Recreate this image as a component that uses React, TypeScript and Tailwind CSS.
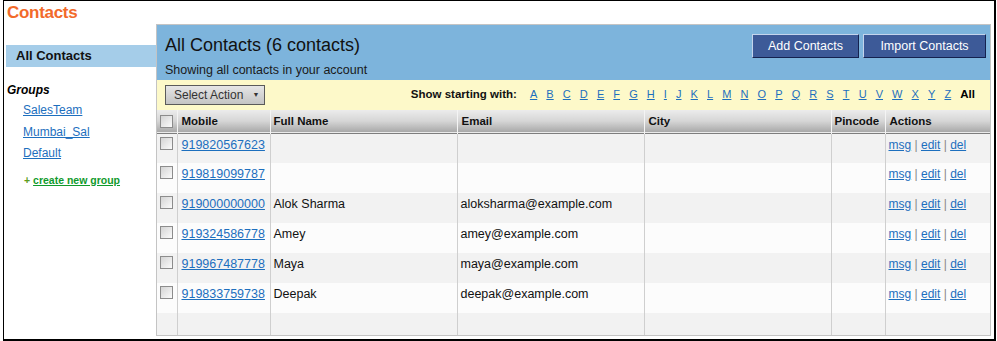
const font = { fontFamily: '"Liberation Sans", Arial, sans-serif' };

const letters = "ABCDEFGHIJKLMNOPQRSTUVWXYZ".split("");

const contacts = [
  { mobile: "919820567623", name: "", email: "" },
  { mobile: "919819099787", name: "", email: "" },
  { mobile: "919000000000", name: "Alok Sharma", email: "aloksharma@example.com" },
  { mobile: "919324586778", name: "Amey", email: "amey@example.com" },
  { mobile: "919967487778", name: "Maya", email: "maya@example.com" },
  { mobile: "919833759738", name: "Deepak", email: "deepak@example.com" },
];

const Checkbox = () => (
  <span className="block w-[13px] h-[13px] border border-[#8c8c8c] bg-gradient-to-br from-[#d4d4d4] to-[#fbfbfb]" />
);

const Sidebar = () => (
  <div className="w-[152px] shrink-0 pl-[2px]">
    <div className="mt-[21px] h-[22px] bg-[#a5cde9] pl-[10px] flex items-center text-[13px] font-bold text-[#111]">
      All Contacts
    </div>
    <div className="mt-[15px] pl-[1px] h-[16px] leading-[16px] text-[12px] font-bold italic text-black">Groups</div>
    <div className="mt-[2px] pl-[17px] text-[12px]">
      {["SalesTeam", "Mumbai_Sal", "Default"].map((g) => (
        <div key={g} className="h-[21.5px] leading-[21.5px]">
          <a href="#" className="text-[#1d6fbe] underline">
            {g}
          </a>
        </div>
      ))}
    </div>
    <div className="mt-[8px] pl-[18px] h-[14px] leading-[14px] text-[10.5px] font-bold">
      <span className="text-[#5c9c1c]">+</span>{" "}
      <a href="#" className="text-[#109a2c] underline">
        create new group
      </a>
    </div>
  </div>
);

const PanelHeader = () => (
  <div className="h-[55px] bg-[#7db4dc] flex justify-between">
    <div className="pl-[8px] pt-[9px]">
      <div className="text-[18px] leading-[22px] text-[#111]">All Contacts (6 contacts)</div>
      <div className="mt-[7px] text-[12.5px] leading-[15px] text-[#1a1a1a]">Showing all contacts in your account</div>
    </div>
    <div className="flex gap-[4px] pt-[9px] pr-[4px]">
      <button className="h-[24px] w-[107px] bg-[#3d5a98] text-white text-[12.5px] border border-t-[#c4d4ec] border-l-[#c4d4ec] border-r-[#15224f] border-b-[#15224f]">
        Add Contacts
      </button>
      <button className="h-[24px] w-[123px] bg-[#3d5a98] text-white text-[12.5px] border border-t-[#c4d4ec] border-l-[#c4d4ec] border-r-[#15224f] border-b-[#15224f]">
        Import Contacts
      </button>
    </div>
  </div>
);

const FilterBar = () => (
  <div className="h-[30px] bg-[#fdf9c9] flex items-center justify-between pl-[8px] pr-[15px]">
    <button className="h-[20px] w-[100px] flex items-center gap-[9px] pl-[8px] border border-[#5a5a5a] bg-gradient-to-b from-[#e6e6e6] to-[#c4c4c4] text-[12px] text-[#333]">
      Select Action
      <span className="text-[7px] text-[#333]">▼</span>
    </button>
    <div className="flex items-center text-[11px]">
      <span className="font-bold text-[11.5px] text-[#111] mr-[13px]">Show starting with:</span>
      <div className="flex gap-[9.1px]">
        {letters.map((l) => (
          <a key={l} href="#" className="text-[#1d6fbe] underline">
            {l}
          </a>
        ))}
        <span className="font-bold text-[11.5px] text-black">All</span>
      </div>
    </div>
  </div>
);

const cell = "border-l border-[#cfcfcf] align-top";

const ContactsTable = () => (
  <table className="w-full table-fixed border-collapse text-[12.5px] text-[#111]">
    <colgroup>
      <col className="w-[20px]" />
      <col className="w-[93px]" />
      <col className="w-[187px]" />
      <col className="w-[187px]" />
      <col className="w-[187px]" />
      <col className="w-[54px]" />
      <col />
    </colgroup>
    <thead>
      <tr className="h-[23px] bg-gradient-to-b from-[#ececec] via-[#d6d6d6] to-[#a9a9a9] border-b border-[#7e7e7e] text-[11.5px] font-bold text-left">
        <th className="pl-[3px]">
          <Checkbox />
        </th>
        <th className="pl-[4px] border-l border-[#f4f4f4]">Mobile</th>
        <th className="pl-[3px] border-l border-[#f4f4f4]">Full Name</th>
        <th className="pl-[4px] border-l border-[#f4f4f4]">Email</th>
        <th className="pl-[4px] border-l border-[#f4f4f4]">City</th>
        <th className="pl-[3px] border-l border-[#f4f4f4]">Pincode</th>
        <th className="pl-[4px] border-l border-[#f4f4f4]">Actions</th>
      </tr>
    </thead>
    <tbody>
      {contacts.map((c, i) => (
        <tr key={c.mobile} className={i % 2 === 0 ? "h-[30px] bg-[#f2f2f2]" : "h-[30px] bg-[#fcfcfc]"}>
          <td className="align-top pl-[3px] pt-[3px]">
            <Checkbox />
          </td>
          <td className={`${cell} pl-[4px] pt-[2px]`}>
            <a href="#" className="text-[#1d6fbe] underline">
              {c.mobile}
            </a>
          </td>
          <td className={`${cell} pl-[3px] pt-[2px]`}>{c.name}</td>
          <td className={`${cell} pl-[3px] pt-[2px]`}>{c.email}</td>
          <td className={cell} />
          <td className={cell} />
          <td className={`${cell} pl-[3px] pt-[2px] text-[12px]`}>
            <a href="#" className="text-[#1d6fbe] underline">msg</a>
            <span className="text-[#888]"> | </span>
            <a href="#" className="text-[#1d6fbe] underline">edit</a>
            <span className="text-[#888]"> | </span>
            <a href="#" className="text-[#1d6fbe] underline">del</a>
          </td>
        </tr>
      ))}
      <tr className="h-[22px] bg-[#f2f2f2]">
        <td />
        <td className={cell} />
        <td className={cell} />
        <td className={cell} />
        <td className={cell} />
        <td className={cell} />
        <td className={cell} />
      </tr>
    </tbody>
  </table>
);

export default function App() {
  return (
    <div className="w-[997px] h-[341px] bg-white" style={font}>
      <div className="ml-[3px] w-[993px] h-[341px] border-l border-t border-r-2 border-b-2 border-black">
        <div className="h-[23px] pl-[3px] pt-[2px] text-[17px] leading-[20px] font-bold tracking-[-0.3px] text-[#f26a2a]">
          Contacts
        </div>
        <div className="flex">
          <Sidebar />
          <div className="w-[835px] border border-[#c4c4c4]">
            <PanelHeader />
            <FilterBar />
            <ContactsTable />
          </div>
        </div>
      </div>
    </div>
  );
}
